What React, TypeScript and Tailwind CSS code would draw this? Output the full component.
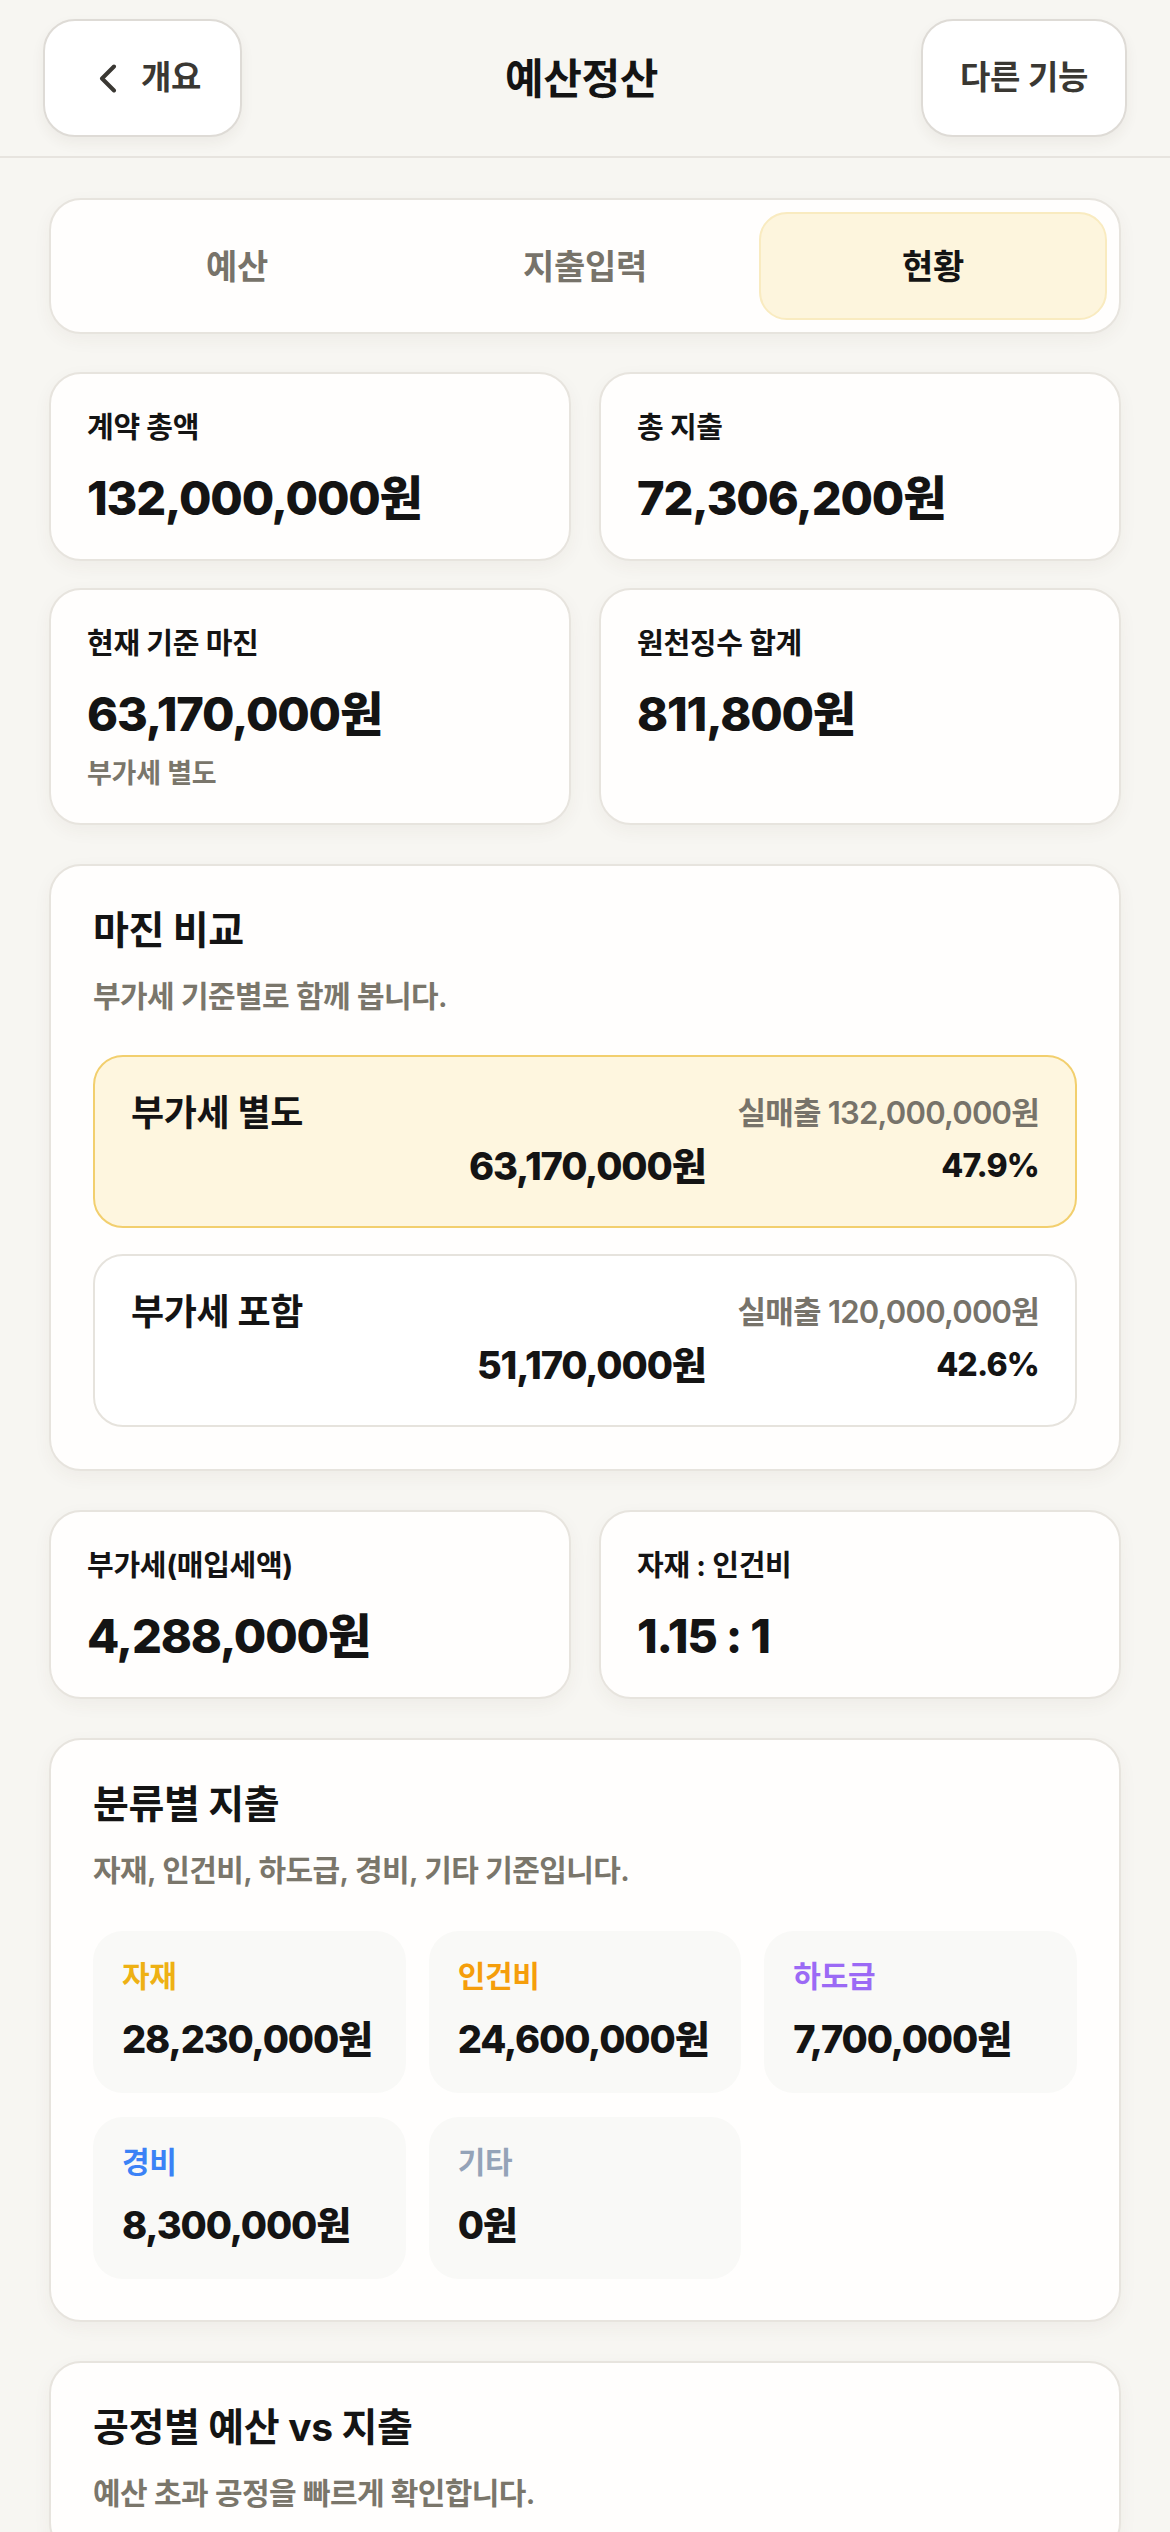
import React from 'react'

const stats = [
    { label: '계약 총액', value: '132,000,000원' },
    { label: '총 지출', value: '72,306,200원' },
    { label: '현재 기준 마진', value: '63,170,000원', sub: '부가세 별도' },
    { label: '원천징수 합계', value: '811,800원' },
]

const margins = [
    { label: '부가세 별도', amount: '63,170,000원', sales: '실매출 132,000,000원', rate: '47.9%', active: true },
    { label: '부가세 포함', amount: '51,170,000원', sales: '실매출 120,000,000원', rate: '42.6%', active: false },
]

const categories = [
    { label: '자재', value: '28,230,000원', color: 'text-[#eeb114]' },
    { label: '인건비', value: '24,600,000원', color: 'text-[#f59e0b]' },
    { label: '하도급', value: '7,700,000원', color: 'text-[#9b6af5]' },
    { label: '경비', value: '8,300,000원', color: 'text-[#3b82f6]' },
    { label: '기타', value: '0원', color: 'text-[#94a3b8]' },
]

const card = 'bg-[#fffefd] border-2 border-[#e7e4de] rounded-[32px] shadow-[0_6px_18px_rgba(70,60,40,0.05)]'

function StatCard({ label, value, sub }: { label: string; value: string; sub?: string }) {
    return (
        <div className={`${card} px-[36px] pt-[36px] pb-[33px]`}>
            <p className="text-[29px] leading-[35px] font-bold text-[#141414] tracking-[-0.01em]">{label}</p>
            <p className="mt-[25px] text-[47px] leading-[56px] font-extrabold text-[#141414] tracking-[-0.025em]">{value}</p>
            {sub && <p className="mt-[16px] text-[27px] leading-[32px] font-semibold text-[#7a766b] tracking-[-0.01em]">{sub}</p>}
        </div>
    )
}

function SectionHead({ title, desc }: { title: string; desc: string }) {
    return (
        <>
            <h2 className="text-[39px] leading-[46px] font-bold text-[#141414] tracking-[-0.01em]">{title}</h2>
            <p className="mt-[25px] text-[30px] leading-[36px] font-semibold text-[#7a766b] tracking-[-0.02em]">{desc}</p>
        </>
    )
}

export default function App() {
    return (
        <div className="min-h-screen bg-[#f7f6f2] font-[Inter,'Noto_Sans_CJK_KR',sans-serif] text-[#141414]">
            {/* header */}
            <header className="flex items-center justify-between px-[43px] py-[19px] border-b-2 border-[#e7e4df]">
                <button className="h-[118px] w-[199px] flex items-center gap-[24px] pl-[54px] bg-white border-2 border-[#dedbd6] rounded-[32px] shadow-[0_6px_14px_rgba(60,50,30,0.06)]">
                    <svg width="18" height="29" viewBox="0 0 18 29" fill="none">
                        <polyline points="15,2.5 3,14.5 15,26.5" stroke="#3a3833" strokeWidth="4" strokeLinecap="round" strokeLinejoin="round" />
                    </svg>
                    <span className="text-[33px] font-semibold text-[#3a3833] tracking-[-0.01em]">개요</span>
                </button>
                <h1 className="text-[42px] font-bold text-[#141414] tracking-[-0.01em]">예산정산</h1>
                <button className="h-[118px] w-[206px] flex items-center justify-center bg-white border-2 border-[#dedbd6] rounded-[32px] shadow-[0_6px_14px_rgba(60,50,30,0.06)]">
                    <span className="text-[33px] font-semibold text-[#3a3833] tracking-[-0.01em]">다른 기능</span>
                </button>
            </header>

            <main className="px-[49px] pt-[40px] flex flex-col gap-[39px]">
                {/* tabs */}
                <div className={`${card} p-[12px] grid grid-cols-3`}>
                    {['예산', '지출입력', '현황'].map((t, i) => (
                        <div
                            key={t}
                            className={`h-[108px] flex items-center justify-center rounded-[28px] border-2 text-[34px] tracking-[-0.01em] ${i === 2 ? 'bg-[#fdf5dd] border-[#f9ebc0] font-bold text-[#141414]' : 'border-transparent font-semibold text-[#77736a]'}`}
                        >
                            {t}
                        </div>
                    ))}
                </div>

                {/* stats */}
                <div className="grid grid-cols-2 gap-x-[28px] gap-y-[27px] -mt-[1px]">
                    {stats.map((s) => (
                        <StatCard key={s.label} {...s} />
                    ))}
                </div>

                {/* margin compare */}
                <section className={`${card} px-[42px] pt-[41px] pb-[42px]`}>
                    <SectionHead title="마진 비교" desc="부가세 기준별로 함께 봅니다." />
                    <div className="mt-[41px] flex flex-col gap-[26px]">
                        {margins.map((m) => (
                            <div
                                key={m.label}
                                className={`grid grid-cols-[1fr_auto] gap-x-[32px] gap-y-[10px] px-[36px] pt-[35px] pb-[38px] rounded-[30px] border-2 ${m.active ? 'bg-[#fef6df] border-[#f2cf6e]' : 'bg-white border-[#e6e3dd]'}`}
                            >
                                <p className="text-[36px] leading-[42px] font-bold tracking-[-0.01em]">{m.label}</p>
                                <p className="text-[31px] leading-[42px] font-semibold text-[#77736a] text-right tracking-[-0.025em]">{m.sales}</p>
                                <p className="text-[38px] leading-[44px] font-extrabold text-right tracking-[-0.03em]">{m.amount}</p>
                                <p className="text-[32px] leading-[44px] font-extrabold text-right tracking-[-0.025em]">{m.rate}</p>
                            </div>
                        ))}
                    </div>
                </section>

                {/* vat / ratio */}
                <div className="grid grid-cols-2 gap-x-[28px]">
                    <StatCard label="부가세(매입세액)" value="4,288,000원" />
                    <StatCard label="자재 : 인건비" value="1.15 : 1" />
                </div>

                {/* category */}
                <section className={`${card} px-[42px] pt-[41px] pb-[41px]`}>
                    <SectionHead title="분류별 지출" desc="자재, 인건비, 하도급, 경비, 기타 기준입니다." />
                    <div className="mt-[43px] grid grid-cols-3 gap-x-[23px] gap-y-[24px]">
                        {categories.map((c) => (
                            <div key={c.label} className="bg-[#f9f9f7] rounded-[30px] px-[29px] pt-[28px] pb-[32px]">
                                <p className={`text-[30px] leading-[35px] font-bold tracking-[-0.01em] ${c.color}`}>{c.label}</p>
                                <p className="mt-[23px] text-[38px] leading-[44px] font-extrabold tracking-[-0.03em]">{c.value}</p>
                            </div>
                        ))}
                    </div>
                </section>

                {/* process budget */}
                <section className={`${card} px-[42px] pt-[41px] pb-[42px] mb-[40px]`}>
                    <SectionHead title="공정별 예산 vs 지출" desc="예산 초과 공정을 빠르게 확인합니다." />
                </section>
            </main>
        </div>
    )
}
